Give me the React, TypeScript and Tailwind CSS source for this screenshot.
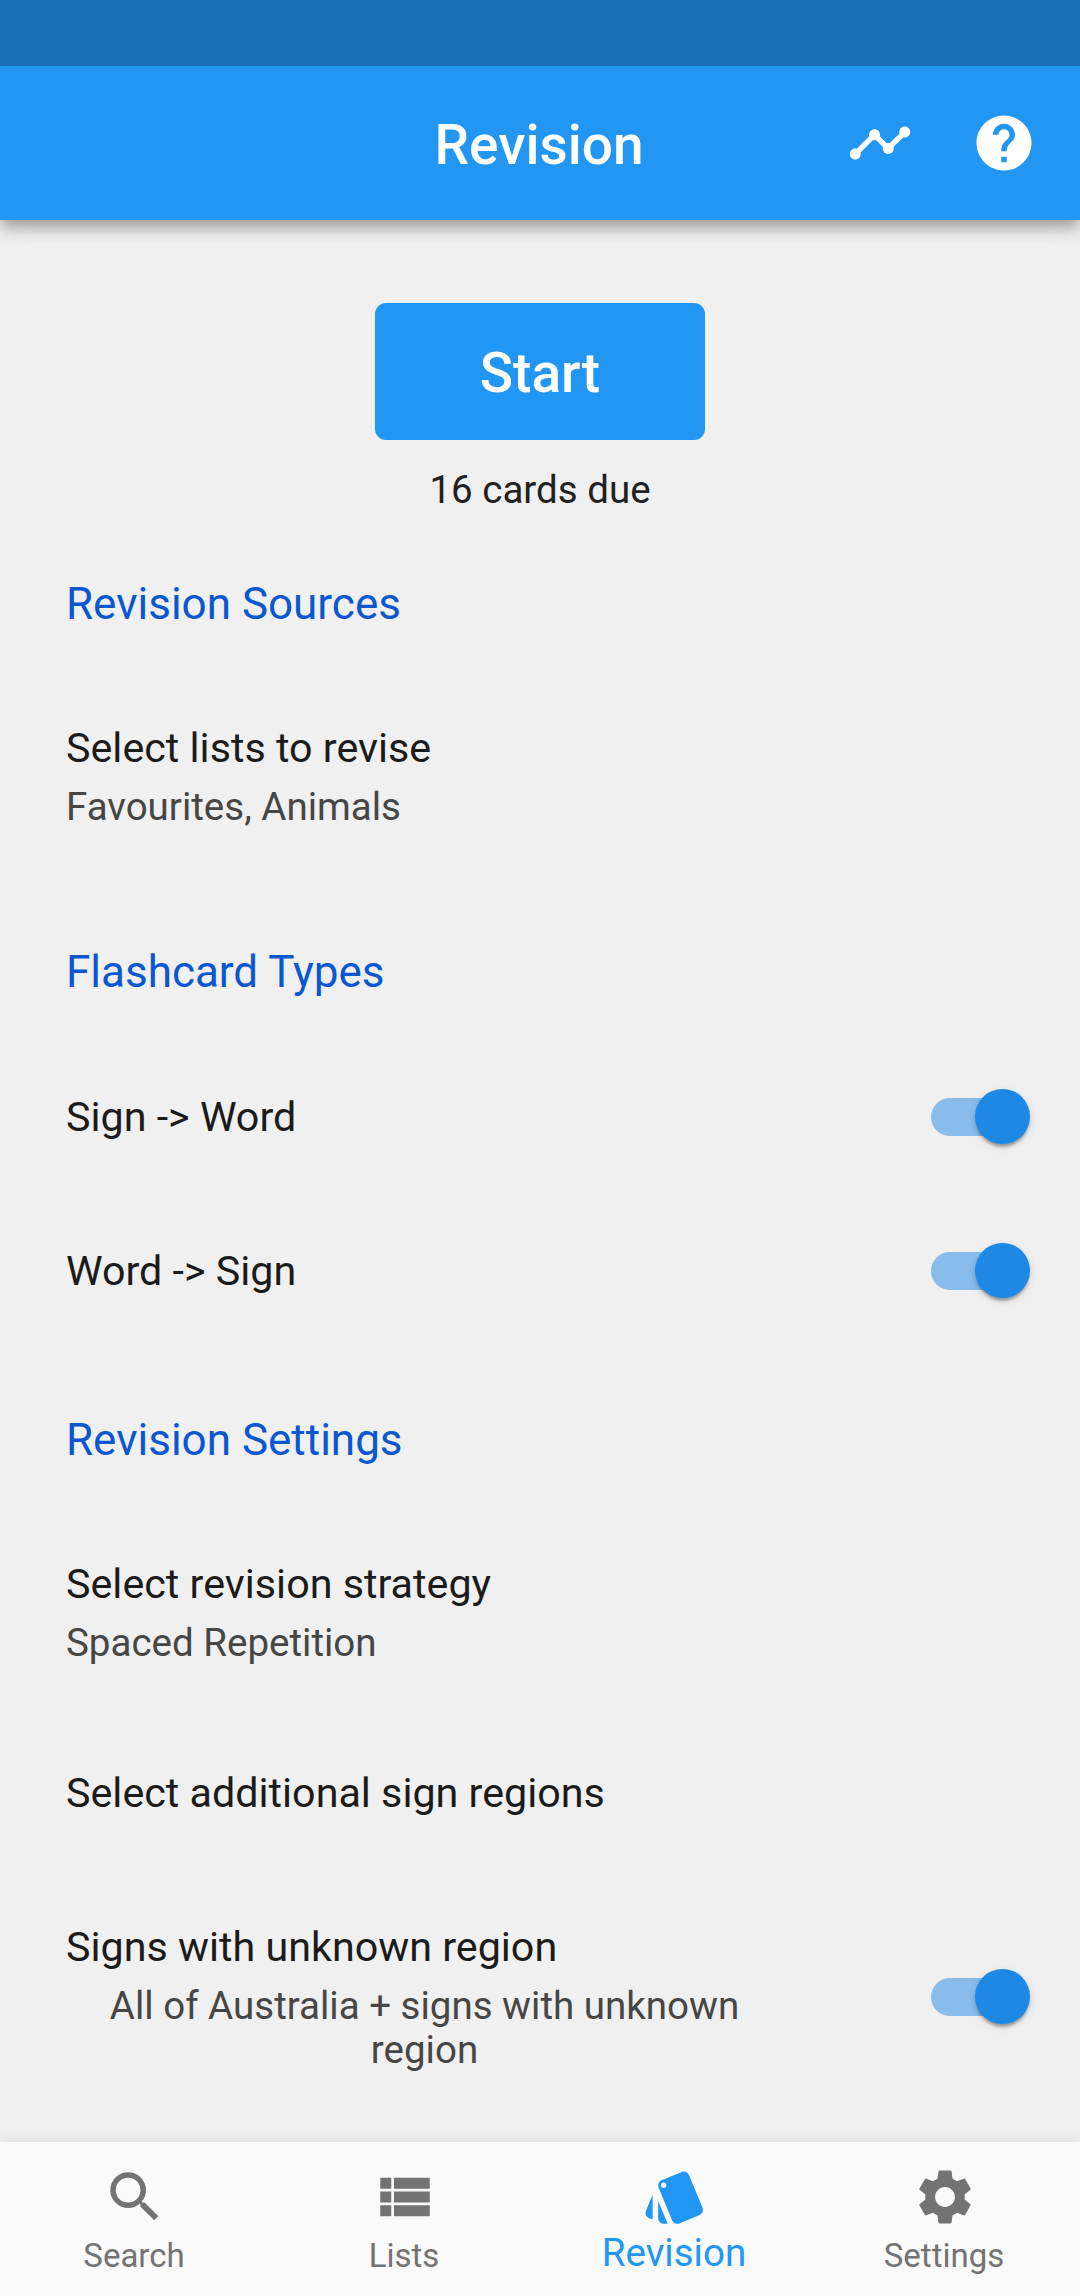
import React, { useState } from "react";
import {
  MdHelp,
  MdSearch,
  MdSettings,
  MdStyle,
  MdTimeline,
  MdViewList,
} from "react-icons/md";

function SectionTitle({ children }: { children: React.ReactNode }) {
  return (
    <h2 className="h-[160px] pt-[66px] pl-[66px] text-[44px] leading-[52px] text-[#0b57d0]">
      {children}
    </h2>
  );
}

function Switch({ on, onToggle }: { on: boolean; onToggle: () => void }) {
  return (
    <button
      role="switch"
      aria-checked={on}
      onClick={onToggle}
      className="relative mr-[49px] h-[55px] w-[100px] shrink-0"
    >
      <span className="absolute top-[8.5px] left-[0.25px] h-[38.5px] w-[91px] rounded-full bg-[#1e88e5]/50" />
      <span
        className={`absolute top-[0.25px] size-[55px] rounded-full bg-[#1e88e5] shadow-[0_5.5px_3px_-3px_rgba(0,0,0,0.2),0_2.75px_3px_0_rgba(0,0,0,0.14),0_2.75px_8px_0_rgba(0,0,0,0.12)] ${
          on ? "left-[44.25px]" : "left-[-8px]"
        }`}
      />
    </button>
  );
}

interface TileProps {
  title: string;
  subtitle?: string;
  height: string;
  centered?: boolean;
  toggle?: boolean;
}

function Tile({ title, subtitle, height, centered, toggle }: TileProps) {
  const [on, setOn] = useState(true);
  return (
    <div className={`flex items-center justify-between pl-[66px] ${height}`}>
      <div className={`w-[717px] ${subtitle ? "pt-[2px]" : ""}`}>
        <div className="text-[41.25px] leading-[48px] text-[#1b1b1b]">{title}</div>
        {subtitle && (
          <div
            className={`mt-[13px] text-[38.5px] leading-[44px] text-[#464646] ${
              centered ? "text-center" : ""
            }`}
          >
            {subtitle}
          </div>
        )}
      </div>
      {toggle && <Switch on={on} onToggle={() => setOn(!on)} />}
    </div>
  );
}

const tabs = [
  { label: "Search", Icon: MdSearch },
  { label: "Lists", Icon: MdViewList },
  { label: "Revision", Icon: MdStyle },
  { label: "Settings", Icon: MdSettings },
];

export default function App() {
  const active = "Revision";
  return (
    <div className="flex h-[2296px] w-[1080px] flex-col overflow-hidden bg-[#f0f0f0] font-['Roboto',sans-serif]">
      <div className="h-[66px] shrink-0 bg-[#1a70b6]" />
      <header className="relative z-10 grid h-[154px] shrink-0 grid-cols-3 items-center bg-[#2196f3] text-white shadow-[0_5.5px_11px_-2.75px_rgba(0,0,0,0.2),0_11px_13.75px_0_rgba(0,0,0,0.14),0_2.75px_27.5px_0_rgba(0,0,0,0.12)] [clip-path:inset(0_0_-60px_0)]">
        <h1 className="col-start-2 pt-1 pr-[2px] text-center text-[55px] leading-[64px] font-medium">
          Revision
        </h1>
        <div className="flex justify-end gap-[58px] pr-[43px]">
          <MdTimeline className="size-[66px]" />
          <MdHelp className="size-[66px]" />
        </div>
      </header>

      <main className="min-h-0 flex-1 pt-[82.5px]">
        <div className="flex h-[209.5px] flex-col items-center">
          <button className="h-[137.5px] w-[330px] shrink-0 rounded-[11px] bg-[#2196f3] pt-[3px] text-[55px] leading-[64px] font-medium text-white">
            Start
          </button>
          <p className="mt-[27px] text-[38.5px] leading-[45px] text-[#212121]">16 cards due</p>
        </div>

        <SectionTitle>Revision Sources</SectionTitle>
        <Tile title="Select lists to revise" subtitle="Favourites, Animals" height="h-[207.5px]" />

        <SectionTitle>Flashcard Types</SectionTitle>
        <Tile title="Sign -> Word" height="h-[154px]" toggle />
        <Tile title="Word -> Sign" height="h-[154px]" toggle />

        <SectionTitle>Revision Settings</SectionTitle>
        <Tile title="Select revision strategy" subtitle="Spaced Repetition" height="h-[208.5px]" />
        <Tile title="Select additional sign regions" height="h-[154px]" />
        <Tile
          title="Signs with unknown region"
          subtitle="All of Australia + signs with unknown region"
          height="h-[253px]"
          centered
          toggle
        />
      </main>

      <nav className="relative z-10 grid h-[154px] shrink-0 grid-cols-4 bg-[#fafafa] shadow-[0_0_14px_0_rgba(0,0,0,0.1)]">
        {tabs.map(({ label, Icon }) => (
          <div
            key={label}
            className={`flex flex-col items-center pt-[21.5px] ${
              label === active ? "text-[#2196f3]" : "text-[#737373]"
            }`}
          >
            <Icon className="size-[66px] shrink-0" />
            <span
              className={
                label === active
                  ? "mt-[1px] pr-[2px] text-[38.5px] leading-[44px]"
                  : "mt-[6px] pr-[2px] text-[33px] leading-[40px]"
              }
            >
              {label}
            </span>
          </div>
        ))}
      </nav>
    </div>
  );
}
